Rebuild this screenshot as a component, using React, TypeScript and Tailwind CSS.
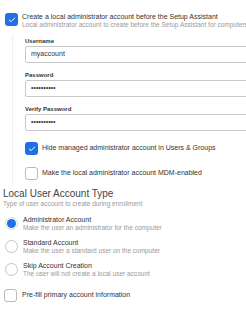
import { Check } from 'lucide-react';

const font = { fontFamily: '"Liberation Sans", Arial, sans-serif' };

const Box = ({ checked }: { checked?: boolean }) =>
    checked ? (
        <div className="w-[13px] h-[13px] shrink-0 rounded-[3px] bg-[#1f6fe5] flex items-center justify-center">
            <Check className="w-[8px] h-[8px] text-white" strokeWidth={3} />
        </div>
    ) : (
        <div className="w-[13px] h-[13px] shrink-0 rounded-[3px] border border-[#b9b9b9] bg-white" />
    );

const Radio = ({ checked }: { checked?: boolean }) =>
    checked ? (
        <div className="w-[13px] h-[13px] shrink-0 rounded-full border border-[#c8d6ee] bg-white flex items-center justify-center">
            <div className="w-[9px] h-[9px] rounded-full bg-[#1f6fe5]" />
        </div>
    ) : (
        <div className="w-[13px] h-[13px] shrink-0 rounded-full border border-[#c4c4c4] bg-white" />
    );

const Field = ({ label, value, first }: { label: string; value: string; first?: boolean }) => (
    <div className={first ? 'flex flex-col' : 'flex flex-col mt-[8px]'}>
        <label className="text-[6px] font-bold text-[#333] leading-[8px] mb-[1px]">{label}</label>
        <div className="h-[17px] w-[240px] border border-[#c9c9c9] rounded-[2px] flex items-center px-[5px] text-[7px] text-[#333]">
            {value}
        </div>
    </div>
);

const RadioRow = ({ title, sub, checked }: { title: string; sub: string; checked?: boolean }) => (
    <div className="flex items-center gap-[5px] pl-[5px]">
        <Radio checked={checked} />
        <div className="flex flex-col">
            <span className="text-[7px] text-[#333] leading-[9px]">{title}</span>
            <span className="text-[6.5px] text-[#999] leading-[8px]">{sub}</span>
        </div>
    </div>
);

export default function App() {
    return (
        <div className="w-[246px] h-[314px] overflow-hidden bg-white whitespace-nowrap" style={font}>
            <div className="flex items-start gap-[4px] pl-[5px] pt-[12px]">
                <div className="mt-[1px]">
                    <Box checked />
                </div>
                <div className="flex flex-col min-w-0">
                    <span className="text-[7px] text-[#333] leading-[9px]">
                        Create a local administrator account before the Setup Assistant
                    </span>
                    <span className="text-[6.5px] text-[#999] leading-[8px] overflow-hidden">
                        Local administrator account to create before the Setup Assistant for computers enrolling
                    </span>
                </div>
            </div>

            <div className="ml-[12px] mt-[6px] border-l border-[#f0f0f0] pl-[12px] pt-[2px] pb-[4px] flex flex-col">
                <Field first label="Username" value="myaccount" />
                <Field label="Password" value="••••••••••" />
                <Field label="Verify Password" value="••••••••••" />
                <div className="flex items-center gap-[4px] mt-[11px] h-[13px]">
                    <Box checked />
                    <span className="text-[7px] text-[#333]">Hide managed administrator account in Users &amp; Groups</span>
                </div>
                <div className="flex items-center gap-[4px] mt-[12px] h-[13px]">
                    <Box />
                    <span className="text-[7px] text-[#333]">Make the local administrator account MDM-enabled</span>
                </div>
            </div>

            <div className="pl-[3px] mt-[4px] flex flex-col">
                <span className="text-[10px] text-[#444] leading-[12px]">Local User Account Type</span>
                <span className="text-[6.5px] text-[#999] leading-[7px]">Type of user account to create during enrollment</span>
            </div>

            <div className="flex flex-col gap-[6px] mt-[8px]">
                <RadioRow checked title="Administrator Account" sub="Make the user an administrator for the computer" />
                <RadioRow title="Standard Account" sub="Make the user a standard user on the computer" />
                <RadioRow title="Skip Account Creation" sub="The user will not create a local user account" />
            </div>

            <div className="flex items-center gap-[5px] pl-[4px] mt-[11px] h-[13px]">
                <Box />
                <span className="text-[7px] text-[#333]">Pre-fill primary account information</span>
            </div>
        </div>
    );
}
